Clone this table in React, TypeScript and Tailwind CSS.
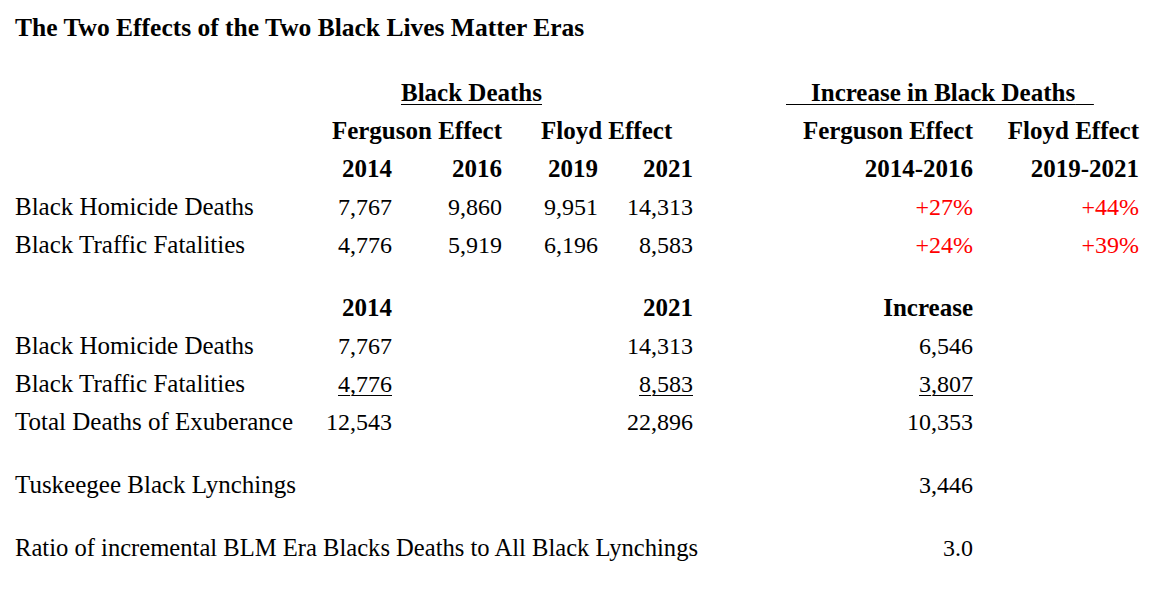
const serif = "font-['Liberation_Serif','Times_New_Roman',serif]";

const cell = "leading-[38px] whitespace-nowrap";

function Num({ v, u, red, bold }: { v: string; u?: boolean; red?: boolean; bold?: boolean }) {
  return (
    <div
      className={`${cell} text-right ${red ? "text-[#ff0000]" : ""} ${
        bold ? "font-bold text-[25px]" : "text-[24px]"
      }`}
    >
      <span className={u ? "underline underline-offset-[3px] decoration-1" : ""}>{v}</span>
    </div>
  );
}

function Blank() {
  return <div className={cell}>&nbsp;</div>;
}

function Spacer() {
  return <div className="col-span-7 h-[25px]" />;
}

export default function App() {
  return (
    <div className={`${serif} bg-white text-black w-[1149px] h-[600px] pl-[15px] pt-[9px]`}>
      <div className="text-[25.5px] font-bold leading-[38px]">
        The Two Effects of the Two Black Lives Matter Eras
      </div>

      <div className="mt-[27px] grid grid-cols-[285px_92px_110px_96px_95px_280px_166px] text-[25px]">
        {/* header row 1 */}
        <Blank />
        <div className={`${cell} col-span-4 font-bold pl-[101px]`}>
          <span className="underline underline-offset-[3px] decoration-1">Black Deaths</span>
        </div>
        <div className={`${cell} col-span-2 font-bold pl-[93px]`}>
          <span className="underline underline-offset-[3px] decoration-1">
            {"\u00a0\u00a0\u00a0\u00a0"}Increase in Black Deaths{"\u00a0\u00a0\u00a0"}
          </span>
        </div>

        {/* header row 2 */}
        <Blank />
        <div className={`${cell} col-span-2 font-bold text-right`}>Ferguson Effect</div>
        <div className={`${cell} col-span-2 font-bold pl-[39px]`}>Floyd Effect</div>
        <Num v="Ferguson Effect" bold />
        <Num v="Floyd Effect" bold />

        {/* header row 3 */}
        <Blank />
        <Num v="2014" bold />
        <Num v="2016" bold />
        <Num v="2019" bold />
        <Num v="2021" bold />
        <Num v="2014-2016" bold />
        <Num v="2019-2021" bold />

        <div className={cell}>Black Homicide Deaths</div>
        <Num v="7,767" />
        <Num v="9,860" />
        <Num v="9,951" />
        <Num v="14,313" />
        <Num v="+27%" red />
        <Num v="+44%" red />

        <div className={cell}>Black Traffic Fatalities</div>
        <Num v="4,776" />
        <Num v="5,919" />
        <Num v="6,196" />
        <Num v="8,583" />
        <Num v="+24%" red />
        <Num v="+39%" red />

        <Spacer />

        <Blank />
        <Num v="2014" bold />
        <Blank />
        <Blank />
        <Num v="2021" bold />
        <Num v="Increase" bold />
        <Blank />

        <div className={cell}>Black Homicide Deaths</div>
        <Num v="7,767" />
        <Blank />
        <Blank />
        <Num v="14,313" />
        <Num v="6,546" />
        <Blank />

        <div className={cell}>Black Traffic Fatalities</div>
        <Num v="4,776" u />
        <Blank />
        <Blank />
        <Num v="8,583" u />
        <Num v="3,807" u />
        <Blank />

        <div className={cell}>Total Deaths of Exuberance</div>
        <Num v="12,543" />
        <Blank />
        <Blank />
        <Num v="22,896" />
        <Num v="10,353" />
        <Blank />

        <Spacer />
        <div className={`${cell} col-span-5`}>Tuskeegee Black Lynchings</div>
        <Num v="3,446" />
        <Blank />

        <Spacer />
        <div className={`${cell} col-span-5 text-[24.6px]`}>
          Ratio of incremental BLM Era Blacks Deaths to All Black Lynchings
        </div>
        <Num v="3.0" />
        <Blank />
      </div>
    </div>
  );
}
